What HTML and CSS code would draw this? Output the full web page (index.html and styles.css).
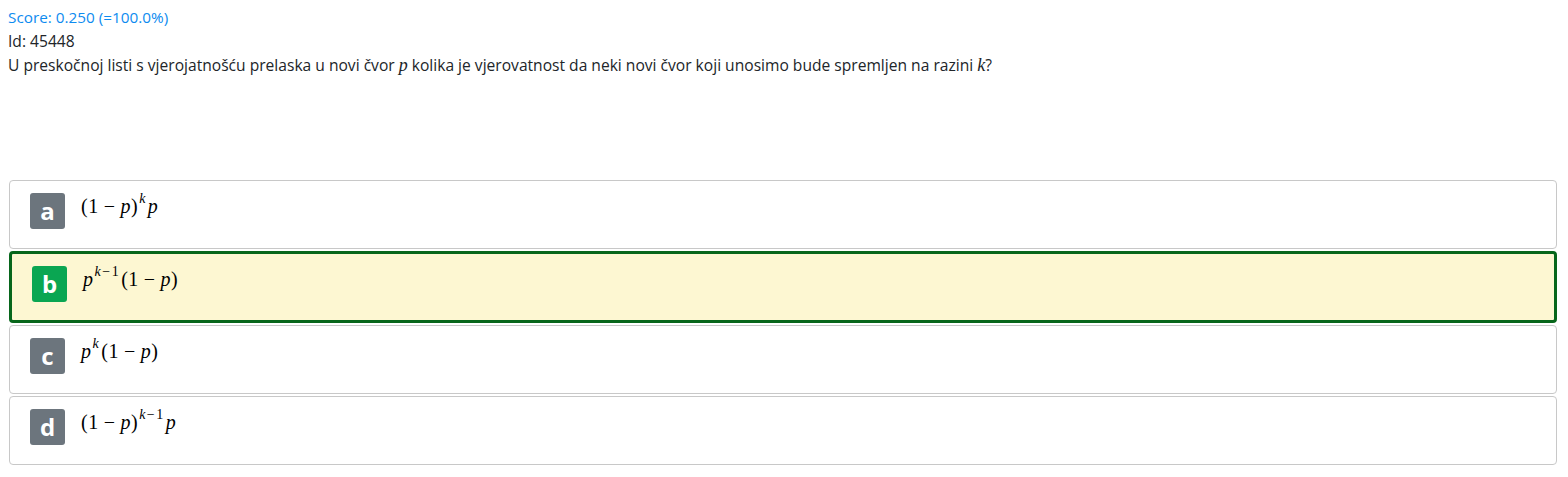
FILE: index.html
```html
<!DOCTYPE html>
<html>
<head>
<meta charset="utf-8">
<link rel="stylesheet" href="styles.css">
</head>
<body>
<div class="page">
  <div class="score">Score: 0.250 (=100.0%)</div>
  <div class="line">Id: 45448</div>
  <div class="line question">U preskočnoj listi s vjerojatnošću prelaska u novi čvor <span class="mi">p</span> kolika je vjerovatnost da neki novi čvor koji unosimo bude spremljen na razini <span class="mi">k</span>?</div>

  <div class="answers">
    <div class="card">
      <span class="badge">a</span>
      <span class="math"><span class="mo">(</span>1<span class="bin">−</span><span class="mi">p</span><span class="mo">)</span><sup class="sup"><span class="mi">k</span></sup><span class="mi">p</span></span>
    </div>
    <div class="card selected">
      <span class="badge ok">b</span>
      <span class="math"><span class="mi">p</span><sup class="sup"><span class="mi">k</span><span class="sbin">−</span>1</sup><span class="mo">(</span>1<span class="bin">−</span><span class="mi">p</span><span class="mo">)</span></span>
    </div>
    <div class="card">
      <span class="badge">c</span>
      <span class="math"><span class="mi">p</span><sup class="sup"><span class="mi">k</span></sup><span class="mo">(</span>1<span class="bin">−</span><span class="mi">p</span><span class="mo">)</span></span>
    </div>
    <div class="card">
      <span class="badge">d</span>
      <span class="math"><span class="mo">(</span>1<span class="bin">−</span><span class="mi">p</span><span class="mo">)</span><sup class="sup"><span class="mi">k</span><span class="sbin">−</span>1</sup><span class="mi">p</span></span>
    </div>
  </div>
</div>
</body>
</html>
```

FILE: styles.css
```css
html, body {
  margin: 0;
  padding: 0;
  background: #ffffff;
}

.page {
  padding: 5px 11px 0 8px;
  font-family: "Open Sans", "Noto Sans", sans-serif;
  font-size: 15.6px;
  line-height: 24px;
  color: #212529;
}

.score {
  color: #0d8bf0;
  font-size: 15.3px;
}

.mi {
  font-family: "Liberation Serif", "DejaVu Serif", serif;
  font-style: italic;
  font-size: 18px;
}

.question {
  margin-bottom: 103px;
}

.answers {
  margin-left: 1px;
  display: flex;
  flex-direction: column;
  gap: 2px;
}

.card {
  box-sizing: border-box;
  height: 69px;
  border: 1px solid #c8c8c8;
  border-radius: 4px;
  padding: 12px 20px;
  display: flex;
  align-items: flex-start;
  gap: 16px;
  background: #ffffff;
}

.card.selected {
  height: 72px;
  border: 3px solid #07661b;
  background: #fdf7d2;
}

.badge {
  flex: none;
  width: 35px;
  height: 36px;
  border-radius: 3px;
  background: #6c757d;
  color: #ffffff;
  font-family: "Open Sans", "Noto Sans", sans-serif;
  font-weight: 700;
  font-size: 24px;
  line-height: 36px;
  text-align: center;
}

.badge.ok {
  background: #0aa652;
}

.math {
  font-family: "Liberation Serif", "DejaVu Serif", serif;
  font-size: 20px;
  line-height: 26px;
  color: #000000;
  white-space: nowrap;
  letter-spacing: 0.5px;
}

.math .mi {
  font-size: 20px;
}

.bin {
  margin: 0 5px;
}

.sup {
  font-size: 14px;
  vertical-align: 10px;
  line-height: 0;
  margin-left: 1px;
  margin-right: 2px;
}

.sup .mi {
  font-size: 14px;
}

.sbin {
  margin: 0 1px;
}
```
